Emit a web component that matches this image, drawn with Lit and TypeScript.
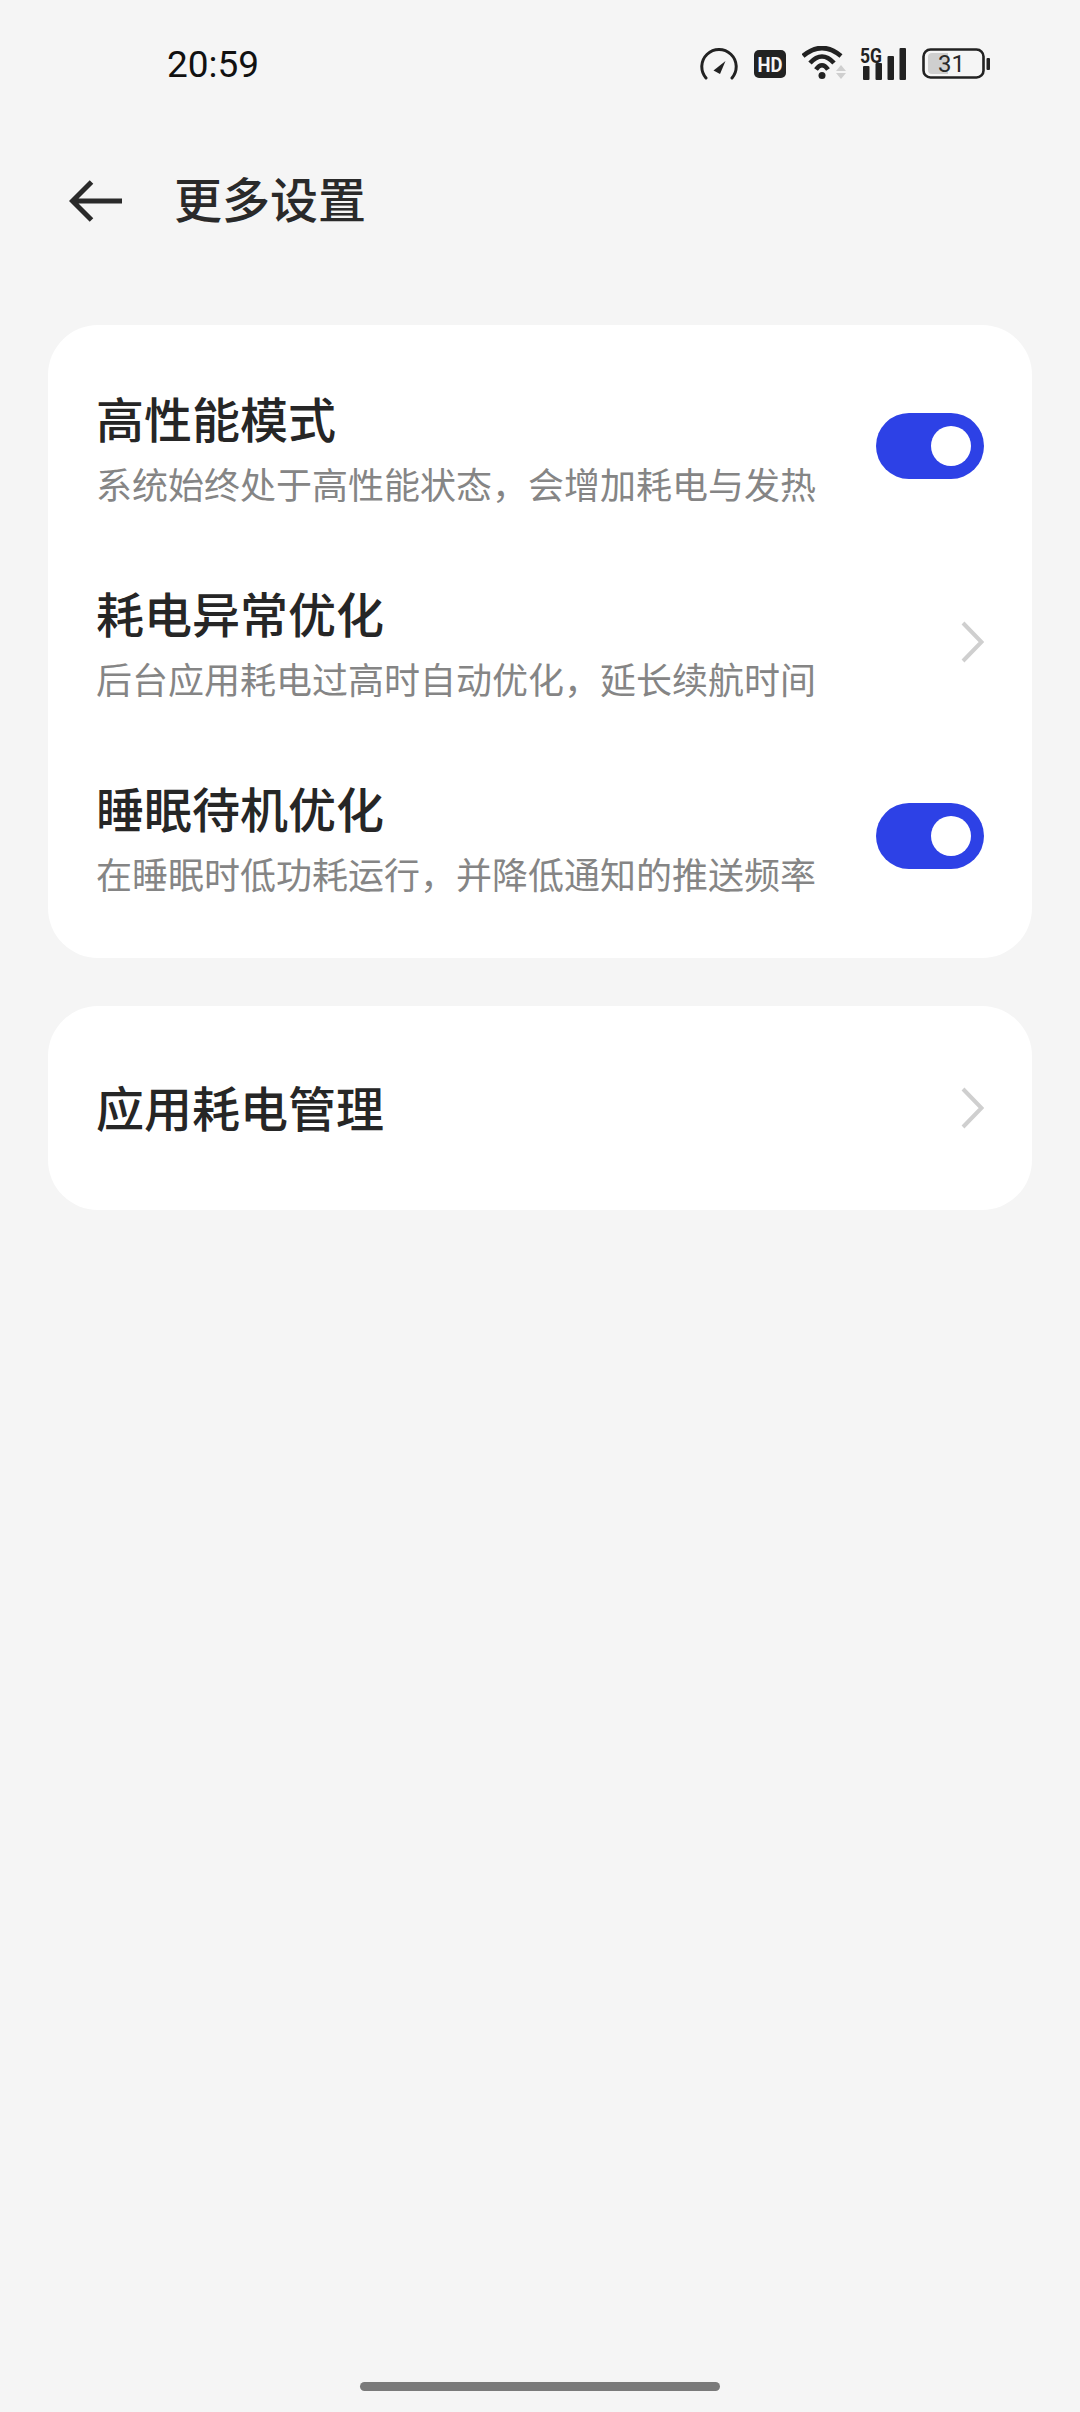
import { LitElement, html, css, svg } from 'lit';
import { customElement } from 'lit/decorators.js';

const gauge = svg`<svg class="ic" width="38" height="32" viewBox="0 0 38 32">
  <path d="M6 30A17.2 17.2 0 1 1 32 30" fill="none" stroke="#222" stroke-width="3" stroke-linecap="round"/>
  <path d="M13.5 22.5L25.5 13L20 26Z" fill="#222"/>
</svg>`;

const hd = svg`<svg class="ic" width="32" height="28" viewBox="0 0 32 28">
  <rect width="32" height="28" rx="5" fill="#222"/>
  <text x="16" y="21.5" text-anchor="middle" font-family="Roboto" font-weight="700" font-size="20" textLength="25" lengthAdjust="spacingAndGlyphs" fill="#f5f5f5">HD</text>
</svg>`;

const wifi = svg`<svg class="ic" width="44" height="36" viewBox="0 0 44 36">
  <g fill="none" stroke="#222" stroke-width="4.6">
    <path d="M1 10Q20 -6 39 10"/>
    <path d="M8 17Q20 4 32 17"/>
    <path d="M14 23.5Q20 15 26 23.5"/>
  </g>
  <circle cx="20" cy="29.5" r="3.5" fill="#222"/>
  <path d="M39 19L44 25H34ZM34 27H44L39 33Z" fill="#cfcfcf"/>
</svg>`;

const signal = svg`<svg class="ic sig" width="48" height="38" viewBox="-2 -6 48 38">
  <text x="0" y="15" font-family="Roboto" font-weight="700" font-size="21" textLength="22" lengthAdjust="spacingAndGlyphs" fill="#222">5G</text>
  <rect x="3" y="18" width="6.5" height="14" rx="1" fill="#222"/>
  <rect x="15.5" y="15" width="6.5" height="17" rx="1" fill="#222"/>
  <rect x="27.5" y="8" width="6.5" height="24" rx="1" fill="#222"/>
  <rect x="39.5" y="0" width="6.5" height="32" rx="1" fill="#222"/>
</svg>`;

const battery = svg`<svg class="ic" width="68" height="32" viewBox="0 0 68 32">
  <rect x="1.5" y="1.5" width="60" height="28" rx="7" fill="none" stroke="#222" stroke-width="2.6"/>
  <path d="M10 5H26V26H10A4 4 0 0 1 6 22V9A4 4 0 0 1 10 5Z" fill="#cfcfcf"/>
  <rect x="64.5" y="10" width="3.5" height="12" rx="1" fill="#222"/>
  <text x="29.5" y="24" text-anchor="middle" font-family="Roboto" font-size="24" fill="#2a2a2a">31</text>
</svg>`;

const backArrow = svg`<svg width="54" height="42" viewBox="0 0 54 42">
  <path d="M22.5 2L3.5 21L22.5 40M4 21H53" fill="none" stroke="#2a2a2a" stroke-width="5"/>
</svg>`;

const chevron = svg`<svg class="chev" width="26" height="42" viewBox="0 0 26 42">
  <path d="M5 2L23.5 21L5 40" fill="none" stroke="#cfcfcf" stroke-width="4"/>
</svg>`;

@customElement('app-root')
export class AppRoot extends LitElement {
  static styles = css`
    :host {
      display: block;
      width: 1080px;
      height: 2412px;
      background: #f5f5f5;
      font-family: "Noto Sans CJK SC", "Noto Sans", sans-serif;
      position: relative;
      overflow: hidden;
    }
    .status {
      height: 128px;
      padding: 0 90px 0 167px;
      box-sizing: border-box;
      display: flex;
      align-items: center;
      justify-content: space-between;
    }
    .time {
      font-family: Roboto, sans-serif;
      font-size: 37px;
      color: #111;
      line-height: 1;
    }
    .icons {
      display: flex;
      align-items: center;
      gap: 16px;
    }
    .ic { display: block; }
    .sig { margin: -6px 0 0 -4px; }
    .header {
      height: 146px;
      display: flex;
      align-items: center;
      padding-left: 69px;
      gap: 51px;
    }
    .header svg { display: block; }
    .header h1 {
      margin: 0 0 8px;
      font-size: 48px;
      font-weight: 500;
      color: #2a2a2a;
      line-height: 1;
    }
    .cards {
      padding: 51px 48px 0;
      display: flex;
      flex-direction: column;
      gap: 48px;
    }
    .card {
      background: #fff;
      border-radius: 50px;
      padding: 24px 48px;
    }
    .row {
      height: 195px;
      display: flex;
      align-items: center;
      justify-content: space-between;
    }
    .row.single {
      height: 156px;
    }
    .title {
      font-size: 48px;
      font-weight: 500;
      color: #262626;
      line-height: 64px;
    }
    .sub {
      font-size: 36px;
      color: #858585;
      line-height: 50px;
      margin-top: 9px;
      white-space: nowrap;
    }
    .single .title { margin-bottom: 4px; }
    .toggle {
      width: 108px;
      height: 66px;
      margin-bottom: 1px;
      border-radius: 33px;
      background: #2d41e6;
      display: flex;
      align-items: center;
      justify-content: flex-end;
      padding-right: 13px;
      box-sizing: border-box;
    }
    .knob {
      width: 40px;
      height: 40px;
      border-radius: 50%;
      background: #fff;
    }
    .chev { display: block; }
    .home {
      position: absolute;
      left: 360px;
      bottom: 21px;
      width: 360px;
      height: 9px;
      border-radius: 5px;
      background: #7a7a7a;
    }
  `;

  private rows = [
    { title: '高性能模式', sub: '系统始终处于高性能状态，会增加耗电与发热', toggle: true },
    { title: '耗电异常优化', sub: '后台应用耗电过高时自动优化，延长续航时间', toggle: false },
    { title: '睡眠待机优化', sub: '在睡眠时低功耗运行，并降低通知的推送频率', toggle: true },
  ];

  render() {
    return html`
      <div class="status">
        <span class="time">20:59</span>
        <div class="icons">${gauge}${hd}${wifi}${signal}${battery}</div>
      </div>
      <div class="header">
        ${backArrow}
        <h1>更多设置</h1>
      </div>
      <div class="cards">
        <div class="card">
          ${this.rows.map(
            (r) => html`
              <div class="row">
                <div>
                  <div class="title">${r.title}</div>
                  <div class="sub">${r.sub}</div>
                </div>
                ${r.toggle ? html`<div class="toggle"><div class="knob"></div></div>` : chevron}
              </div>
            `
          )}
        </div>
        <div class="card">
          <div class="row single">
            <div class="title">应用耗电管理</div>
            ${chevron}
          </div>
        </div>
      </div>
      <div class="home"></div>
    `;
  }
}
